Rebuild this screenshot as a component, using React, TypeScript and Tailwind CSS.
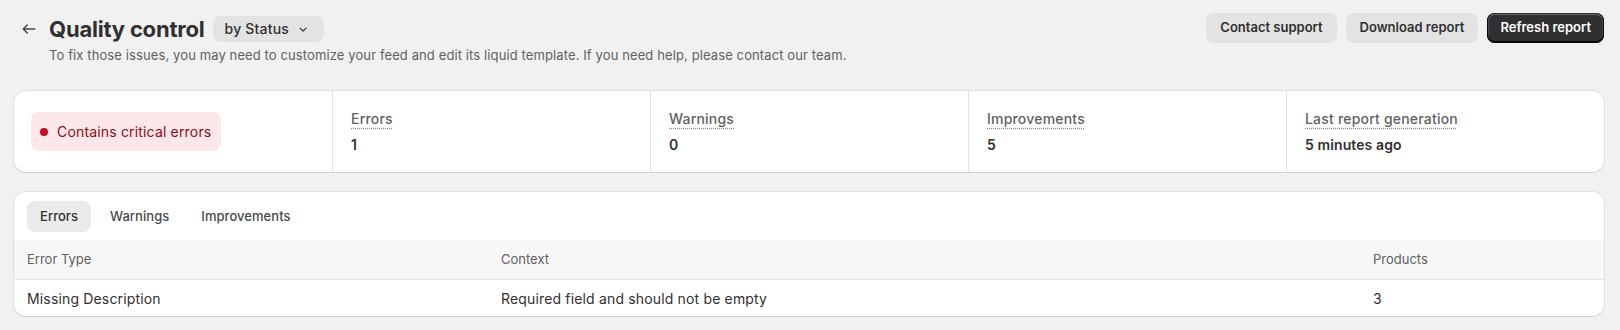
import React from "react";

const stats = [
  { label: "Errors", value: "1" },
  { label: "Warnings", value: "0" },
  { label: "Improvements", value: "5" },
  { label: "Last report generation", value: "5 minutes ago" },
];

const tabs = ["Errors", "Warnings", "Improvements"];

function ArrowLeft() {
  return (
    <svg width="20" height="20" viewBox="0 0 20 20" className="shrink-0 fill-[#4a4a4a]">
      <path d="M16.5 10a.75.75 0 0 1-.75.75h-9.69l2.72 2.72a.75.75 0 0 1-1.06 1.06l-4-4a.75.75 0 0 1 0-1.06l4-4a.75.75 0 0 1 1.06 1.06l-2.72 2.72h9.69a.75.75 0 0 1 .75.75Z" />
    </svg>
  );
}

function ChevronDown() {
  return (
    <svg width="16" height="16" viewBox="0 0 20 20" className="shrink-0 fill-[#303030]">
      <path d="M5.72 8.47a.75.75 0 0 1 1.06 0l3.22 3.22 3.22-3.22a.75.75 0 1 1 1.06 1.06l-3.75 3.75a.75.75 0 0 1-1.06 0l-3.75-3.75a.75.75 0 0 1 0-1.06Z" />
    </svg>
  );
}

export default function App() {
  return (
    <div className="min-h-screen bg-[#f1f1f1] pl-[14px] pr-[16px] pt-[13px] pb-[16px] font-['Inter',sans-serif] text-[#303030]">
      <header className="flex items-start justify-between">
        <div className="pt-[2px]">
          <div className="flex h-[27px] items-center">
            <span className="ml-[5px] flex items-center">
              <ArrowLeft />
            </span>
            <h1 className="ml-[10px] text-[22px] font-bold leading-[26px] tracking-[-0.2px]">Quality control</h1>
            <button className="ml-[8px] flex h-[26px] items-center gap-[6px] rounded-[8px] bg-[#e3e3e3] pl-[12px] pr-[13px] text-[14px] font-medium tracking-[0.2px]">
              by Status
              <ChevronDown />
            </button>
          </div>
          <p className="mt-[3px] pl-[35px] text-[13px] leading-[20px] tracking-[0.11px] text-[#616161]">
            To fix those issues, you may need to customize your feed and edit its liquid template. If you need help, please contact our team.
          </p>
        </div>
        <div className="flex gap-[9px]">
          <button className="h-[30px] rounded-[8px] bg-[#e3e3e3] px-[14px] text-[13px] font-semibold">Contact support</button>
          <button className="h-[30px] rounded-[8px] bg-[#e3e3e3] px-[14px] text-[13px] font-semibold">Download report</button>
          <button className="h-[30px] rounded-[8px] bg-[#303030] px-[13px] text-[13px] font-semibold text-white shadow-[inset_0_-1px_0_1px_rgba(0,0,0,0.8),inset_0_0_0_1px_#303030,inset_0_0.5px_0_1.5px_rgba(255,255,255,0.25)]">
            Refresh report
          </button>
        </div>
      </header>

      <section className="mt-[26px] grid h-[81px] grid-cols-5 rounded-[12px] bg-white shadow-[0_1px_0_0_rgba(26,26,26,0.07),0_0_0_1px_rgba(0,0,0,0.07)]">
        <div className="flex items-center pl-[17px]">
          <span className="flex h-[39px] items-center gap-[9px] rounded-[8px] bg-[#fee7e8] pl-[9px] pr-[10px] text-[14px] tracking-[0.17px] text-[#8e0b21]">
            <span className="h-[8px] w-[8px] rounded-full bg-[#c70a24]" />
            Contains critical errors
          </span>
        </div>
        {stats.map((s) => (
          <div key={s.label} className="flex flex-col justify-center gap-[6px] border-l border-[#e3e3e3] pl-[18px] pt-[1px]">
            <span className="self-start text-[14px] font-medium leading-[20px] tracking-[0.2px] text-[#616161] underline decoration-dotted decoration-[#8a8a8a] underline-offset-[4px]">
              {s.label}
            </span>
            <span className="text-[14px] font-semibold leading-[20px] tracking-[0.1px]">{s.value}</span>
          </div>
        ))}
      </section>

      <section className="mt-[20px] overflow-hidden rounded-[12px] bg-white shadow-[0_1px_0_0_rgba(26,26,26,0.07),0_0_0_1px_rgba(0,0,0,0.07)]">
        <div className="flex gap-[6px] px-[13px] pb-[8px] pt-[9px]">
          {tabs.map((t, i) => (
            <button
              key={t}
              className={`h-[31px] rounded-[8px] px-[13px] text-[13px] font-medium tracking-[0.05px] ${i === 0 ? "bg-[#ebebeb] text-[#303030]" : "text-[#4a4a4a]"}`}
            >
              {t}
            </button>
          ))}
        </div>
        <div className="grid h-[40px] grid-cols-[474px_872px_1fr] items-center border-b border-[#e3e3e3] bg-[#f7f7f7] pl-[13px] text-[13px] text-[#616161]">
          <span>Error Type</span>
          <span>Context</span>
          <span>Products</span>
        </div>
        <div className="grid h-[36px] grid-cols-[474px_872px_1fr] items-center pl-[13px] text-[14px] tracking-[0.16px]">
          <span>Missing Description</span>
          <span>Required field and should not be empty</span>
          <span>3</span>
        </div>
      </section>
    </div>
  );
}
